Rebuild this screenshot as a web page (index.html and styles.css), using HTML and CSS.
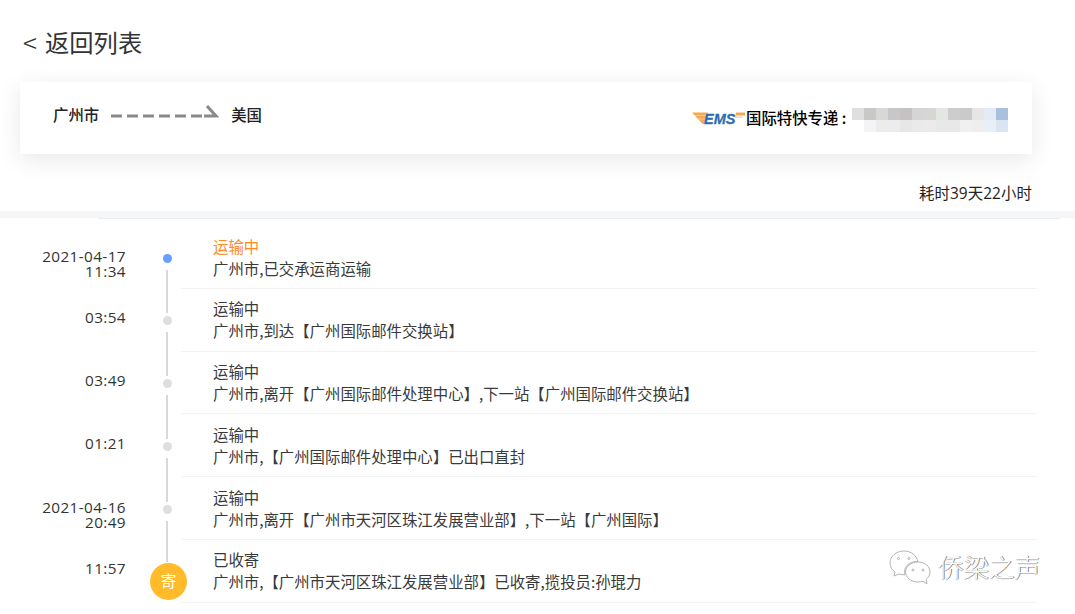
FILE: index.html
```html
<!DOCTYPE html>
<html lang="zh-CN">
<head>
<meta charset="utf-8">
<title>物流详情</title>
<link rel="stylesheet" href="styles.css">
</head>
<body>
<header class="title"><span class="back">&lt;</span><span>返回列表</span></header>
<section class="card">
  <div class="route">
    <span>广州市</span>
    <svg class="arrow" width="108" height="20" viewBox="0 0 108 20">
      <path class="arrow-line" d="M0 12H93"/>
      <path class="arrow-head" d="M93 12H105L96 2"/>
    </svg>
    <span>美国</span>
  </div>
  <div class="carrier">
    <svg class="ems" width="54" height="18" viewBox="0 -2 54 18">
      <path d="M0 1.500H16L12 13H10.500Z" fill="#f5a952"/>
      <path d="M3 4.500H15M6 8H14" stroke="#fbd6a8" stroke-width=".8"/>
      <text x="12" y="12.800" class="ems-text">EMS</text>
      <path d="M44 1.500H53V4.500H43.500Z" fill="#f5a952"/>
      <path d="M43 5.500H50V6.800H42.800Z" fill="#f9cb94"/>
    </svg>
    <span class="carrier-name">国际特快专递 :</span>
    <div class="blurred"></div>
  </div>
</section>
<p class="duration">耗时39天22小时</p>
<div class="band"></div>
<div class="band-line"></div>
<ol class="timeline">
  <li class="row">
    <div class="time">2021-04-17<br>11:34</div>
    <div class="axis first"><i class="dot now"></i><i class="seg grow"></i></div>
    <div class="info"><div class="state now-text">运输中</div><div>广州市,已交承运商运输</div></div>
  </li>
  <li class="row">
    <div class="time single">03:54</div>
    <div class="axis"><i class="seg top"></i><i class="dot"></i><i class="seg grow"></i></div>
    <div class="info"><div class="state">运输中</div><div>广州市,到达【广州国际邮件交换站】</div></div>
  </li>
  <li class="row">
    <div class="time single">03:49</div>
    <div class="axis"><i class="seg top"></i><i class="dot"></i><i class="seg grow"></i></div>
    <div class="info"><div class="state">运输中</div><div>广州市,离开【广州国际邮件处理中心】,下一站【广州国际邮件交换站】</div></div>
  </li>
  <li class="row">
    <div class="time single">01:21</div>
    <div class="axis"><i class="seg top"></i><i class="dot"></i><i class="seg grow"></i></div>
    <div class="info"><div class="state">运输中</div><div>广州市,【广州国际邮件处理中心】已出口直封</div></div>
  </li>
  <li class="row">
    <div class="time">2021-04-16<br>20:49</div>
    <div class="axis"><i class="seg top"></i><i class="dot"></i><i class="seg grow"></i></div>
    <div class="info"><div class="state">运输中</div><div>广州市,离开【广州市天河区珠江发展营业部】,下一站【广州国际】</div></div>
  </li>
  <li class="row last">
    <div class="time single">11:57</div>
    <div class="axis"><i class="seg top-long"></i><span class="send">寄</span></div>
    <div class="info"><div class="state">已收寄</div><div>广州市,【广州市天河区珠江发展营业部】已收寄,揽投员:孙琨力</div></div>
  </li>
</ol>
<div class="watermark">
  <svg width="42" height="36" viewBox="0 0 42 36" fill="#fff" stroke="#b4b4b4" stroke-width="1">
    <path d="M15 1C7 1 1 6.500 1 13C1 17 3 20 6 22L5 26L10 24C12 24.500 14 25 16 24.800C14 18 19 11 29 11.500C27.500 5.500 22 1 15 1Z"/>
    <path d="M29 12C22 12 16.500 16.500 16.500 22C16.500 27.500 22 32 29 32C31 32 32.500 31.600 34 31.200L38 34L37 29.500C39.500 27.500 41 25 41 22C41 16.500 36 12 29 12Z"/>
    <circle cx="9.500" cy="8.500" r="1" fill="none"/><circle cx="20" cy="8.500" r="1" fill="none"/>
    <circle cx="24" cy="20" r="1" fill="none"/><circle cx="34" cy="20" r="1" fill="none"/>
  </svg>
  <span class="wm-text">侨梁之声</span>
</div>
</body>
</html>
```
FILE: styles.css
```css
* { box-sizing: border-box; }
html, body { margin: 0; padding: 0; }
body {
  width: 1075px;
  height: 614px;
  overflow: hidden;
  background: #fff;
  color: #333;
  font-family: "Noto Sans CJK SC", "Liberation Sans", sans-serif;
  font-size: 15.400px;
  position: relative;
}
.title {
  height: 82px;
  padding: 24px 0 0 23px;
  display: flex;
  align-items: flex-start;
  font-size: 24.300px;
  line-height: 36px;
  color: #333;
}
.back { width: 22px; font-size: 26px; font-weight: 300; }
.card {
  width: 1012px;
  height: 72px;
  margin-left: 20px;
  padding: 0 24px 0 33px;
  background: #fff;
  box-shadow: 0 6px 22px rgba(0, 0, 0, .09);
  display: flex;
  align-items: center;
  justify-content: space-between;
}
.route {
  display: flex;
  align-items: center;
  gap: 12px;
  margin-bottom: 8px;
  font-weight: 500;
  color: #222;
}
.arrow path { fill: none; stroke: #8a8a8a; stroke-width: 3; }
.arrow-line { stroke-dasharray: 11 5; }
.carrier { display: flex; align-items: center; }
.ems { flex: none; }
.ems-text {
  font-family: "Liberation Sans", sans-serif;
  font-size: 14.500px;
  font-weight: 700;
  font-style: italic;
  fill: #2d6cb0;
  stroke: #2d6cb0;
  stroke-width: .3;
}
.carrier-name {
  width: 106px;
  margin-bottom: 2px;
  color: #000;
  font-weight: 500;
  white-space: nowrap;
}
.blurred {
  width: 156px;
  height: 24px;
  margin-top: 4px;
  background:
    linear-gradient(90deg,
      #e0dfdf 0 12px, #c9c8c9 12px 24px, #d8d8d7 24px 36px, #c8c6c8 36px 48px,
      #c5c2c3 48px 60px, #d6d5d5 60px 72px, #d6d6d5 72px 84px, #e3e7e4 84px 96px,
      #cecdce 96px 108px, #ccc9ca 108px 120px, #e6e6e6 120px 132px, #e4ebf4 132px 144px,
      #aac1de 144px 156px) top / 100% 12px no-repeat,
    linear-gradient(90deg,
      #fff 0 12px, #f3f4f5 12px 24px, #ececec 24px 48px, #e8e7e7 48px 60px,
      #eaeaea 60px 72px, #ebebeb 72px 84px, #e8e8e8 84px 108px, #f0f0f0 108px 120px,
      #eee 120px 132px, #e9eff6 132px 144px, #dbe5f1 144px 156px) bottom / 100% 12px no-repeat;
}
.duration {
  margin: 0;
  height: 57px;
  padding: 29px 43px 0 0;
  text-align: right;
  font-family: "Open Sans", "Noto Sans CJK SC", sans-serif;
  font-size: 15.400px;
  line-height: 22px;
  letter-spacing: .1px;
  color: #222;
}
.band { height: 7px; background: #f5f6f8; }
.band-line { height: 1px; margin: 0 15px 0 98px; background: #eceef1; }
.timeline { list-style: none; margin: 7px 0 0; padding: 0; }
.row { display: flex; height: 62.800px; }
.time {
  width: 126px;
  padding-top: 23px;
  text-align: right;
  font-family: "Open Sans", "Noto Sans CJK SC", sans-serif;
  font-size: 15.300px;
  line-height: 15px;
  letter-spacing: .4px;
  color: #333;
}
.time.single { padding-top: 21.500px; }
.axis {
  width: 82px;
  margin-right: -27px;
  display: flex;
  flex-direction: column;
  align-items: center;
  position: relative;
  z-index: 1;
}
.axis.first { padding-top: 28px; }
.dot { width: 9px; height: 9px; flex: none; margin-left: 1px; border-radius: 50%; background: #dedede; }
.dot.now { background: #66a0ff; }
.seg { width: 2px; background: #d9d9d9; display: block; flex: none; }
.seg.top { height: 24.500px; margin-bottom: 3px; }
.seg.grow { flex: 1; margin-top: 7px; }
.seg.top-long { height: 22px; margin-bottom: 1px; }
.send {
  width: 37px;
  height: 37px;
  flex: none;
  margin-left: 3px;
  border-radius: 50%;
  background: #ffbb29;
  color: #fff;
  font-size: 16px;
  line-height: 34px;
  text-align: center;
}
.info {
  flex: 1;
  margin-right: 38px;
  padding: 8.500px 0 0 32px;
  border-bottom: 1px solid #f3f3f3;
  line-height: 22px;
  color: #3a3a3a;
  white-space: nowrap;
}
.now-text { color: #ff8a1f; }
.watermark {
  position: absolute;
  left: 889px;
  top: 548px;
  display: flex;
  align-items: center;
  gap: 7px;
}
.wm-text {
  padding-bottom: 3px;
  font-size: 25.500px;
  font-weight: 300;
  line-height: 36px;
  color: #fff;
  text-shadow: 1px 0 0 #7f7f7f, 0 1px 0 #bdbdbd;
  white-space: nowrap;
}
```
